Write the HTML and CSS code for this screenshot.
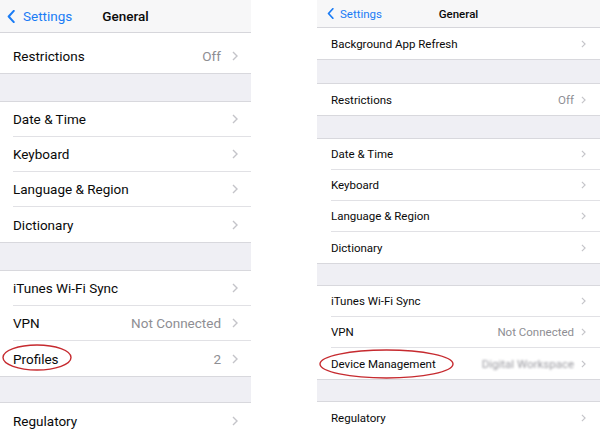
FILE: index.html
```html
<!DOCTYPE html>
<html lang="en">
<head>
  <meta charset="utf-8">
  <title>General settings</title>
  <link rel="stylesheet" href="styles.css">
</head>
<body>
  <div class="shots">
    <!-- left phone: profiles -->
    <section class="phone phone-a">
      <header class="nav">
        <span class="back"><svg class="back-chev" viewBox="0 0 8 14"><path d="M7 1L1.5 7L7 13"/></svg>Settings</span>
        <span class="title">General</span>
        <span></span>
      </header>
      <div class="group top">
        <div class="row tall"><div class="row-in"><span class="label">Restrictions</span><span class="value">Off</span><svg class="chev" viewBox="0 0 6 10"><path d="M1 1L5 5L1 9"/></svg></div></div>
      </div>
      <div class="gap ga1"></div>
      <div class="group">
        <div class="row"><div class="row-in"><span class="label">Date &amp; Time</span><svg class="chev" viewBox="0 0 6 10"><path d="M1 1L5 5L1 9"/></svg></div></div>
        <div class="row"><div class="row-in"><span class="label">Keyboard</span><svg class="chev" viewBox="0 0 6 10"><path d="M1 1L5 5L1 9"/></svg></div></div>
        <div class="row"><div class="row-in"><span class="label">Language &amp; Region</span><svg class="chev" viewBox="0 0 6 10"><path d="M1 1L5 5L1 9"/></svg></div></div>
        <div class="row"><div class="row-in"><span class="label">Dictionary</span><svg class="chev" viewBox="0 0 6 10"><path d="M1 1L5 5L1 9"/></svg></div></div>
      </div>
      <div class="gap ga2"></div>
      <div class="group">
        <div class="row"><div class="row-in"><span class="label">iTunes Wi-Fi Sync</span><svg class="chev" viewBox="0 0 6 10"><path d="M1 1L5 5L1 9"/></svg></div></div>
        <div class="row"><div class="row-in"><span class="label">VPN</span><span class="value">Not Connected</span><svg class="chev" viewBox="0 0 6 10"><path d="M1 1L5 5L1 9"/></svg></div></div>
        <div class="row marked">
          <div class="row-in"><span class="label">Profiles</span><span class="value">2</span><svg class="chev" viewBox="0 0 6 10"><path d="M1 1L5 5L1 9"/></svg></div>
          <svg class="ring ring-a" viewBox="0 0 70 27"><ellipse cx="35" cy="13.5" rx="34" ry="12.5"/></svg>
        </div>
      </div>
      <div class="gap ga3"></div>
      <div class="group">
        <div class="row"><div class="row-in"><span class="label">Regulatory</span><svg class="chev" viewBox="0 0 6 10"><path d="M1 1L5 5L1 9"/></svg></div></div>
      </div>
    </section>

    <!-- right phone: device management -->
    <section class="phone phone-b">
      <header class="nav">
        <span class="back"><svg class="back-chev" viewBox="0 0 8 14"><path d="M7 1L1.5 7L7 13"/></svg>Settings</span>
        <span class="title">General</span>
        <span></span>
      </header>
      <div class="group top">
        <div class="row"><div class="row-in"><span class="label">Background App Refresh</span><svg class="chev" viewBox="0 0 6 10"><path d="M1 1L5 5L1 9"/></svg></div></div>
      </div>
      <div class="gap gb1"></div>
      <div class="group">
        <div class="row"><div class="row-in"><span class="label">Restrictions</span><span class="value">Off</span><svg class="chev" viewBox="0 0 6 10"><path d="M1 1L5 5L1 9"/></svg></div></div>
      </div>
      <div class="gap gb2"></div>
      <div class="group">
        <div class="row"><div class="row-in"><span class="label">Date &amp; Time</span><svg class="chev" viewBox="0 0 6 10"><path d="M1 1L5 5L1 9"/></svg></div></div>
        <div class="row"><div class="row-in"><span class="label">Keyboard</span><svg class="chev" viewBox="0 0 6 10"><path d="M1 1L5 5L1 9"/></svg></div></div>
        <div class="row"><div class="row-in"><span class="label">Language &amp; Region</span><svg class="chev" viewBox="0 0 6 10"><path d="M1 1L5 5L1 9"/></svg></div></div>
        <div class="row"><div class="row-in"><span class="label">Dictionary</span><svg class="chev" viewBox="0 0 6 10"><path d="M1 1L5 5L1 9"/></svg></div></div>
      </div>
      <div class="gap gb3"></div>
      <div class="group">
        <div class="row"><div class="row-in"><span class="label">iTunes Wi-Fi Sync</span><svg class="chev" viewBox="0 0 6 10"><path d="M1 1L5 5L1 9"/></svg></div></div>
        <div class="row"><div class="row-in"><span class="label">VPN</span><span class="value">Not Connected</span><svg class="chev" viewBox="0 0 6 10"><path d="M1 1L5 5L1 9"/></svg></div></div>
        <div class="row marked">
          <div class="row-in"><span class="label">Device Management</span><span class="value blurred">Digital Workspace</span><svg class="chev" viewBox="0 0 6 10"><path d="M1 1L5 5L1 9"/></svg></div>
          <svg class="ring ring-b" viewBox="0 0 135 30"><ellipse cx="67.5" cy="15" rx="66.5" ry="14"/></svg>
        </div>
      </div>
      <div class="gap gb4"></div>
      <div class="group">
        <div class="row"><div class="row-in"><span class="label">Regulatory</span><svg class="chev" viewBox="0 0 6 10"><path d="M1 1L5 5L1 9"/></svg></div></div>
      </div>
    </section>
  </div>
</body>
</html>
```

FILE: styles.css
```css
body {
  margin: 0;
  background: #fff;
  font-family: Roboto, "Liberation Sans", sans-serif;
  color: #0a0a0a;
}
.shots {
  display: flex;
  justify-content: space-between;
  width: 600px;
  height: 431px;
  overflow: hidden;
}
.phone {
  background: #efeff4;
  overflow: hidden;
}
.phone-a {
  width: 251px;
  font-size: 13.5px;
}
.phone-b {
  width: 283px;
  font-size: 11.5px;
}

/* nav bar */
.nav {
  display: grid;
  grid-template-columns: 1fr auto 1fr;
  align-items: center;
  background: #f7f7f8;
  border-bottom: 1px solid #d6d6db;
}
.phone-a .nav {
  height: 32px;
}
.phone-b .nav {
  height: 27px;
}
.back {
  display: flex;
  align-items: center;
  color: #1a7cf5;
}
.back-chev {
  fill: none;
  stroke: #1a7cf5;
  stroke-width: 2.2;
  stroke-linecap: round;
  stroke-linejoin: round;
}
.phone-a .back {
  padding-left: 7px;
}
.phone-a .back-chev {
  width: 8px;
  height: 13px;
  margin-right: 8px;
}
.phone-b .back {
  padding-left: 10px;
}
.phone-b .back-chev {
  width: 7px;
  height: 11px;
  margin-right: 6px;
}
.title {
  font-weight: 500;
}

/* table groups */
.group {
  background: #fff;
  border-top: 1px solid #d8d8dd;
  border-bottom: 1px solid #d8d8dd;
}
.group.top {
  border-top: none;
}
.row {
  padding-left: 13px;
}
.phone-b .row {
  padding-left: 14px;
}
.row-in {
  display: flex;
  align-items: center;
  box-sizing: border-box;
  border-bottom: 1px solid #e1e1e5;
  padding-right: 13px;
}
.phone-b .row-in {
  height: 31px;
  padding-right: 14px;
}
.phone-a .row-in {
  height: 35px;
}
.phone-a .row.tall .row-in {
  height: 40px;
  padding-top: 6px;
}
.row:last-child .row-in {
  border-bottom: none;
}
.label {
  flex: 1;
}
.value {
  color: #8e8e93;
  margin-right: 11px;
}
.phone-b .value {
  margin-right: 7px;
}
.blurred {
  color: #9a9aa0;
  filter: blur(1.3px);
}
.chev {
  width: 6px;
  height: 10px;
  fill: none;
  stroke: #c4c4c9;
  stroke-width: 1.4;
}
.phone-b .chev {
  width: 5px;
  height: 8px;
}

/* spacers between groups */
.gap.ga1 { height: 27px; }
.gap.ga2 { height: 27px; }
.gap.ga3 { height: 25px; }
.gap.gb1 { height: 23px; }
.gap.gb2 { height: 22px; }
.gap.gb3 { height: 21px; }
.gap.gb4 { height: 21px; }

/* red marker rings */
.marked {
  position: relative;
}
.ring {
  position: absolute;
  fill: none;
  stroke: #c62a2f;
  stroke-width: 1.4;
}
.ring-a {
  left: 2px;
  top: 3px;
  width: 70px;
  height: 27px;
}
.ring-b {
  left: 2px;
  top: 1px;
  width: 135px;
  height: 30px;
}
```
